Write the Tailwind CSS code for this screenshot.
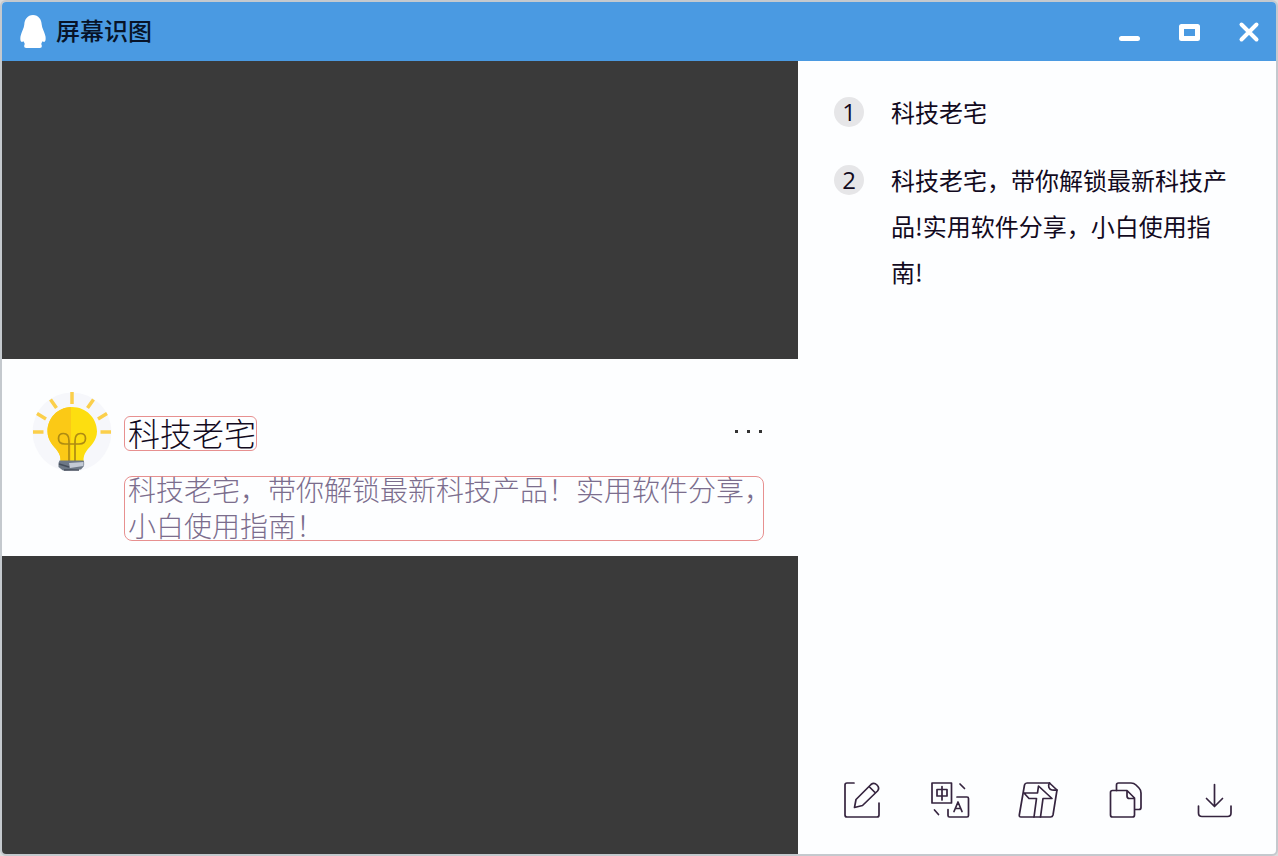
<!DOCTYPE html>
<html lang="zh-CN">
  <head>
    <meta charset="UTF-8" />
    <meta name="viewport" content="width=device-width, initial-scale=1.0" />
    <title>屏幕识图</title>
    <script src="https://cdn.jsdelivr.net/npm/@tailwindcss/browser@4"></script>
  </head>
  <body class="bg-[#dcdcdc] font-['Noto_Sans_CJK_SC',sans-serif] text-[#120a1e]">
    <div class="flex min-h-screen flex-col overflow-hidden rounded-md border-2 border-[#c4c9ce] bg-[#fdfeff]">
      <!-- title bar -->
      <header class="flex h-[59px] items-center bg-[#4a9ae2] pl-[18px] pr-[17px]">
        <svg class="h-[34px] w-[26px]" viewBox="0 0 26 34" fill="#fff" aria-hidden="true">
          <path d="M13 0C7.500 0 4.500 4.500 4.300 9.500C4.100 13 1.500 17 .6 21C0 24 .5 26.800 1.600 26.800C2.600 26.800 3 26.500 3.800 26.500C4 27.500 4.400 28.300 4.800 29C4.200 29.700 4 31 4.400 32.200C5 33.200 10.500 33 13 33C15.500 33 21 33.200 21.600 32.200C22 31 21.800 29.700 21.200 29C21.600 28.300 22 27.500 22.200 26.500C23 26.500 23.400 26.800 24.400 26.800C25.500 26.800 26 24 25.400 21C24.500 17 21.900 13 21.700 9.500C21.500 4.500 18.500 0 13 0Z" />
        </svg>
        <h1 class="ml-[10px] flex-1 pb-1 text-2xl font-medium text-[#071328]">屏幕识图</h1>
        <div class="flex gap-10">
          <button class="size-5" aria-label="最小化">
            <svg viewBox="0 0 20 20" class="size-5 overflow-visible" stroke="#fff" stroke-width="5" stroke-linecap="round"><path d="M2.500 16.500H18.500" /></svg>
          </button>
          <button class="size-5" aria-label="最大化">
            <svg viewBox="0 0 20 20" class="size-5 overflow-visible" fill="none" stroke="#fff" stroke-width="5" stroke-linejoin="round"><path d="M2.500 4.500H18.500V16.500H2.500Z" /></svg>
          </button>
          <button class="size-5" aria-label="关闭">
            <svg viewBox="0 0 20 20" class="size-5 overflow-visible" stroke="#fff" stroke-width="4" stroke-linecap="round"><path d="M2.500 2.500L17.500 17.500M17.500 2.500L2.500 17.500" /></svg>
          </button>
        </div>
      </header>

      <main class="flex flex-1">
        <!-- captured image -->
        <section class="flex min-w-0 flex-1 flex-col justify-center bg-[#3a3a3a]">
          <div class="flex gap-3 bg-[#fdfeff] pt-8 pr-[34px] pb-[15px] pl-[30px]">
            <svg class="h-[84px] w-20 shrink-0" viewBox="0 0 80 84" fill="none" aria-hidden="true">
              <circle cx="40" cy="41" r="39.500" fill="#f6f7fb" />
              <g stroke="#fbcf4b" stroke-width="3.500">
                <path d="M40 1V13M18.500 8.500L24.500 17M61.500 8.500L55.500 17M5 22.500L14 28M75 22.500L66 28M1 41H11.500M68.500 41H79" />
              </g>
              <path d="M40 16C26 16 15.500 27 15.500 40.500C15.500 50 22 55 25.500 60C28 63.500 28.500 66 28.500 70H51.500C51.500 66 52 63.500 54.500 60C58 55 65 50 65 40.500C65 27 54 16 40 16Z" fill="#fdde10" />
              <path d="M39 16C25.500 16.500 15.500 27 15.500 40.500C15.500 50 22 55 25.500 60C28 63.500 28.500 66 28.500 70H39Z" fill="#fbc916" />
              <path d="M37 70V50C37 45 35 42.500 31.500 42.500C28.500 42.500 26.500 44.500 26.500 47.500C26.500 51 29 53 33 53H47C51 53 53.500 51 53.500 47.500C53.500 44.500 51.500 42.500 48.500 42.500C45 42.500 43 45 43 50V70" stroke="#ae8b12" stroke-width="1.700" />
              <path d="M27.500 69.500H51.500Q52.500 70.500 52 75L49 78.500L31 79.500L26.500 76V72Z" fill="#6d7886" />
              <path d="M37 72L51.500 71V75L38 77Z" fill="#c3cad5" />
              <path d="M27 73L37 76M32 79H47" stroke="#454e5c" stroke-width="1.500" />
            </svg>
            <div class="min-w-0 flex-1 pt-[25px]">
              <div class="flex items-center justify-between">
                <h2 class="flex h-[35px] items-center rounded-md border border-[#e79090] pb-1 pl-[3px] text-[32px] leading-none font-light whitespace-nowrap">科技老宅</h2>
                <button class="flex items-center gap-[9px] pr-0.5 pb-1" aria-label="更多">
                  <span class="size-[3px] bg-[#333]"></span>
                  <span class="size-[3px] bg-[#333]"></span>
                  <span class="size-[3px] bg-[#333]"></span>
                </button>
              </div>
              <div class="mt-[25px] flex h-[65px] items-center rounded-lg border border-[#e79090] pb-1 pl-[3px]">
                <p class="text-[28px] leading-9 font-light whitespace-nowrap text-[#7b6d8d]">科技老宅，带你解锁最新科技产品！实用软件分享，<br />小白使用指南！</p>
              </div>
            </div>
          </div>
        </section>

        <!-- recognised text -->
        <aside class="flex w-[478px] shrink-0 flex-col justify-between pt-7 pb-[34px]">
          <ol class="flex flex-col gap-[22px] pr-11 pl-9 text-2xl leading-[46px]">
            <li class="flex items-start gap-[27px]">
              <span class="mt-2 flex size-[30px] shrink-0 items-center justify-center rounded-full bg-[#e6e6e8] font-['Open_Sans',sans-serif] leading-none">1</span>
              <p>科技老宅</p>
            </li>
            <li class="flex items-start gap-[27px]">
              <span class="mt-2 flex size-[30px] shrink-0 items-center justify-center rounded-full bg-[#e6e6e8] font-['Open_Sans',sans-serif] leading-none">2</span>
              <p>科技老宅，带你解锁最新科技产品!实用软件分享，小白使用指南!</p>
            </li>
          </ol>

          <div class="flex justify-between pr-[42px] pl-11">
            <button class="size-10" aria-label="编辑">
              <svg viewBox="0 0 40 40" class="size-10" fill="none" stroke="#35243f" stroke-width="1.700" stroke-linecap="round" stroke-linejoin="round">
                <path d="M12 3H5Q3 3 3 5V35Q3 37 5 37H35Q37 37 37 35V23" />
                <path d="M12.500 27.500L14 19.500L29 4.500Q32 2 35 5Q38 8 35.500 11L20.500 25.500ZM27 6.500L33.500 13" />
              </svg>
            </button>
            <button class="size-10" aria-label="翻译">
              <svg viewBox="0 0 40 40" class="size-10" fill="none" stroke="#35243f" stroke-width="1.700" stroke-linecap="round" stroke-linejoin="round">
                <path d="M2 3H21.500V23H2ZM7 9.500H17V16H7ZM12 6.500V20" />
                <path d="M27 17H37Q38.500 17 38.500 18.500V35.500Q38.500 37 37 37H19.500Q18 37 18 35.500V29.500M30 4L34.500 8.500M4.500 30L8.500 34.500" />
                <path d="M24 31.500L28 22L32 31.500M25.500 28.500H30.500" />
              </svg>
            </button>
            <button class="size-10" aria-label="转为文档">
              <svg viewBox="0 0 40 40" class="size-10" fill="none" stroke="#35243f" stroke-width="1.700" stroke-linecap="round" stroke-linejoin="round">
                <path d="M9 3H31.500L39 10L35 35Q34.500 37 32.500 37H3Q1 37 1.300 35L6.500 5Q7 3 9 3Z" />
                <path d="M31.500 3C29.500 6 31 9.500 34 10C36 10.300 38 10 39 10" />
                <path d="M6 13H19.500L20.500 6L34 18.500H25L22.500 37M6 13L11 18.500H18.500L16 37" />
              </svg>
            </button>
            <button class="size-10" aria-label="复制">
              <svg viewBox="0 0 40 40" class="size-10" fill="none" stroke="#35243f" stroke-width="1.700" stroke-linecap="round" stroke-linejoin="round">
                <path d="M10.500 10.500V5Q10.500 3 12.500 3H25Q28 3 30 5L33 8Q35 10 35 13V27.500Q35 29.500 33 29.500H29" />
                <path d="M6.500 10.500H21L28.500 18V35Q28.500 37 26.500 37H6.500Q4.500 37 4.500 35V12.500Q4.500 10.500 6.500 10.500ZM21 10.500V16Q21 18.500 23.500 18.500H28.500" />
              </svg>
            </button>
            <button class="size-10" aria-label="下载">
              <svg viewBox="0 0 40 40" class="size-10" fill="none" stroke="#35243f" stroke-width="1.700" stroke-linecap="round" stroke-linejoin="round">
                <path d="M4.500 26V33Q4.500 36.500 8 36.500H33.500Q37 36.500 37 33V26M20.500 4.500V26M12.500 18.500L20.500 26.500L28.500 18.500" />
              </svg>
            </button>
          </div>
        </aside>
      </main>
    </div>
  </body>
</html>
